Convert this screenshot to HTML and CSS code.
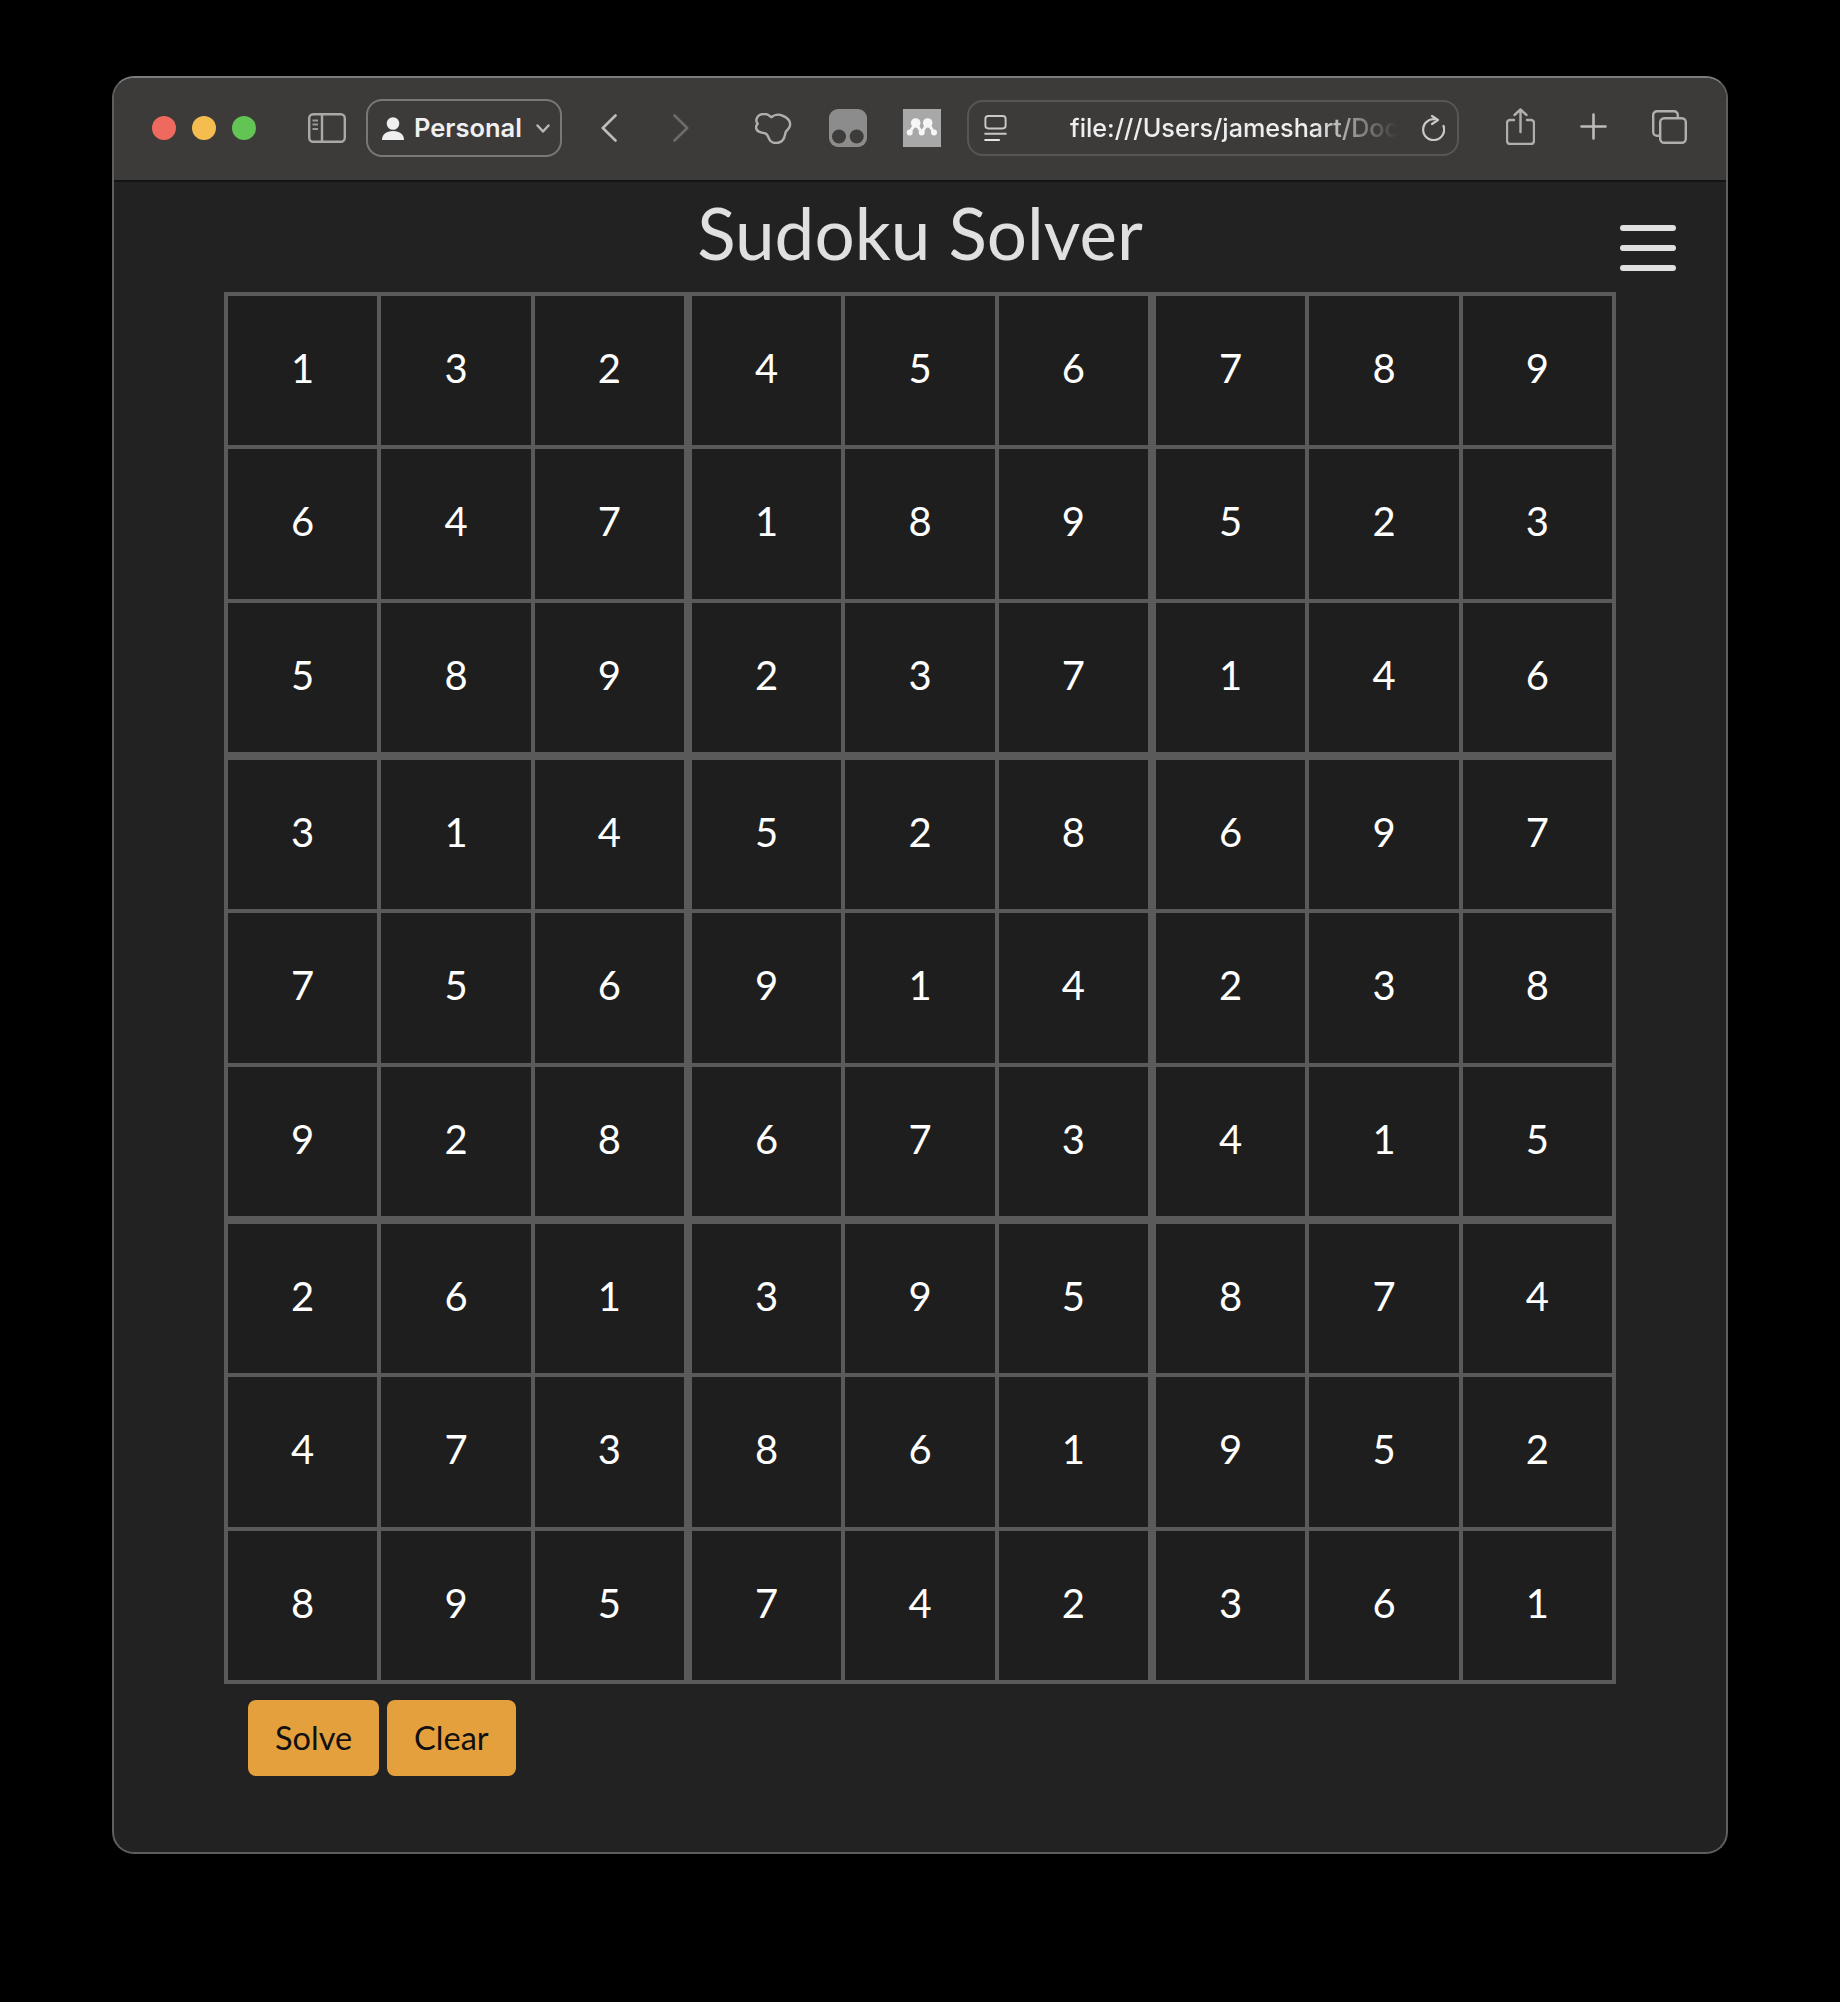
FILE: index.html
```html
<!DOCTYPE html>
<html lang="en">
<head>
    <meta charset="UTF-8">
    <meta name="viewport" content="width=device-width, initial-scale=1.0">
    <title>Sudoku Solver</title>
    <link rel="stylesheet" href="styles.css">
</head>
<body>
    <div class="window">
        <div class="toolbar">
            <span class="light red"></span>
            <span class="light yellow"></span>
            <span class="light green"></span>

            <svg class="icon sidebar-icon" viewBox="0 0 38 30" fill="none" stroke="#aaa9a8" stroke-width="2.4">
                <rect x="1.2" y="1.2" width="35.6" height="27.6" rx="4"/>
                <path d="M14 1.2v27.6"/>
                <path d="M4.500 7.500h5.500M4.500 11.500h5.500M4.500 16h5.500" stroke-width="2" stroke="#9a9998"/>
            </svg>

            <div class="profile">
                <svg class="person" viewBox="0 0 22 23" fill="#efefef">
                    <circle cx="11" cy="6.500" r="6.300"/>
                    <path d="M0 23c0-5.500 4-9 11-9s11 3.500 11 9z"/>
                </svg>
                <span class="profile-name">Personal</span>
                <svg class="profile-arrow" viewBox="0 0 14 9" fill="none" stroke="#b9b8b7" stroke-width="2.4" stroke-linecap="round" stroke-linejoin="round">
                    <path d="M1.500 1.500 7 7.500l5.500-6"/>
                </svg>
            </div>

            <svg class="icon nav-back" viewBox="0 0 16 28" fill="none" stroke="#bdbcbb" stroke-width="2.6" stroke-linecap="round" stroke-linejoin="round">
                <path d="M14.500 1.500 1.800 14l12.700 12.500"/>
            </svg>
            <svg class="icon nav-forward" viewBox="0 0 16 28" fill="none" stroke="#6c6b6a" stroke-width="2.6" stroke-linecap="round" stroke-linejoin="round">
                <path d="M1.500 1.500 14.200 14 1.500 26.500"/>
            </svg>

            <svg class="icon ext-cloud" viewBox="0 0 37 31" fill="none" stroke="#b0afae" stroke-width="2.4" stroke-linejoin="round">
                <path d="M2.700 10.700C.5 8.500 1 4 4.500 2 7.500.5 12 .5 14 2.500L16.500 4.200C19 2 23.500 1 27 2.500 32 4 36 8 35 12.500 34.500 16 31.500 17 30.500 19.500 30 22 30 25 27 28 23 31 18 30.500 15.500 28 13 25.500 13.500 21.500 10.500 20.500 7.500 19.500 4 20 2 17 .5 15 1 12.500 2.700 10.700z"/>
            </svg>
            <svg class="icon ext-glasses" viewBox="0 0 38 38">
                <rect width="38" height="38" rx="9" fill="#8c8c8c"/>
                <circle cx="10" cy="27.500" r="7" fill="#3d3c3b"/>
                <circle cx="27.700" cy="27.500" r="7" fill="#3d3c3b"/>
            </svg>
            <svg class="icon ext-people" viewBox="0 0 38 38">
                <rect width="38" height="38" fill="#a8a8a8"/>
                <path d="M6.700 23.500 12.700 14l6 9.500 6-9.500 6.300 9.500" fill="none" stroke="#f6f6f6" stroke-width="3"/>
                <g fill="#f6f6f6">
                    <circle cx="12.700" cy="14" r="4.800"/>
                    <circle cx="24.700" cy="14" r="4.800"/>
                    <circle cx="6.700" cy="23.500" r="3"/>
                    <circle cx="18.700" cy="23.500" r="3"/>
                    <circle cx="31" cy="23.500" r="3"/>
                </g>
            </svg>

            <div class="address">
                <svg class="page-icon" viewBox="0 0 23 27" fill="none" stroke="#c9c8c7" stroke-width="2">
                    <rect x="1" y="1" width="21" height="13" rx="3"/>
                    <path d="M0 19.500h23"/>
                    <path d="M0 26h16" stroke="#e6e6e6"/>
                </svg>
                <span class="url">file:///Users/jameshart/Docu</span>
                <svg class="reload" viewBox="0 0 23 26" fill="none" stroke="#c9c8c7" stroke-width="2.200" stroke-linecap="round" stroke-linejoin="round">
                    <path d="M13 4.200A10.500 10.500 0 1 0 21.500 11"/>
                    <path d="M10 1l6 4-6 4"/>
                </svg>
            </div>

            <svg class="icon share" viewBox="0 0 29 37" fill="none" stroke="#b0afae" stroke-width="2.400" stroke-linecap="round" stroke-linejoin="round">
                <path d="M8 12H4a3 3 0 0 0-3 3v18a3 3 0 0 0 3 3h21a3 3 0 0 0 3-3V15a3 3 0 0 0-3-3h-4"/>
                <path d="M14.500 24V1.500M8.500 7l6-5.500 6 5.500"/>
            </svg>
            <svg class="icon plus" viewBox="0 0 27 27" fill="none" stroke="#bdbcbb" stroke-width="2.600" stroke-linecap="round">
                <path d="M13.500 1.500v24M1.500 13.500h24"/>
            </svg>
            <svg class="icon tabs" viewBox="0 0 35 34" fill="none" stroke="#b0afae" stroke-width="2.400" stroke-linejoin="round">
                <path d="M8 25.800H5A3.800 3.800 0 0 1 1.200 22V5A3.800 3.800 0 0 1 5 1.200H22A3.800 3.800 0 0 1 25.800 5v3"/>
                <rect x="8.200" y="8.200" width="25.600" height="24.600" rx="4"/>
            </svg>
        </div>

        <div class="page">
            <header class="page-header">
                <h1>Sudoku Solver</h1>
                <button class="menu-button" aria-label="Menu">
                    <span></span><span></span><span></span>
                </button>
            </header>

            <div class="board" id="board"></div>

            <div class="actions">
                <button class="action">Solve</button>
                <button class="action">Clear</button>
            </div>
        </div>
    </div>

    <script>
        // solved grid, row by row
        const solution = [
            "132456789",
            "647189523",
            "589237146",
            "314528697",
            "756914238",
            "928673415",
            "261395874",
            "473861952",
            "895742361"
        ];

        const board = document.getElementById("board");

        for (let boxRow = 0; boxRow < 3; boxRow++) {
            for (let boxCol = 0; boxCol < 3; boxCol++) {
                const box = document.createElement("div");
                box.classList.add("box");
                for (let r = 0; r < 3; r++) {
                    for (let c = 0; c < 3; c++) {
                        const cell = document.createElement("div");
                        cell.classList.add("cell");
                        cell.textContent = solution[boxRow * 3 + r][boxCol * 3 + c];
                        box.appendChild(cell);
                    }
                }
                board.appendChild(box);
            }
        }
    </script>
</body>
</html>
```

FILE: styles.css
```css
html, body {
    margin: 0;
    height: 100%;
    background-color: #000;
}
body {
    font-family: Lato, "Open Sans", sans-serif;
    overflow: hidden;
}
.window {
    box-sizing: border-box;
    width: 1616px;
    height: 1778px;
    margin: 76px 0 0 112px;
    background-color: #222222;
    border: 2px solid #5e5e5e;
    border-top-color: #7d7d7c;
    border-radius: 22px;
    overflow: hidden;
}

/* safari style title bar */
.toolbar {
    box-sizing: border-box;
    display: flex;
    align-items: center;
    height: 104px;
    padding: 0 0 2px 38px;
    background-color: #3c3b3a;
    border-bottom: 2px solid #141414;
}
.icon {
    flex: none;
    display: block;
}
.light {
    flex: none;
    width: 24px;
    height: 24px;
    border-radius: 50%;
    margin-right: 16px;
}
.red {
    background-color: #ee6a5f;
}
.yellow {
    background-color: #f5bd4f;
}
.green {
    background-color: #61c454;
}
.sidebar-icon {
    width: 38px;
    height: 30px;
    margin-left: 36px;
}
.profile {
    box-sizing: border-box;
    flex: none;
    display: flex;
    align-items: center;
    width: 196px;
    height: 58px;
    margin-left: 20px;
    padding-left: 14px;
    border: 2px solid #797877;
    border-radius: 16px;
}
.person {
    width: 22px;
    height: 23px;
}
.profile-name {
    margin-left: 10px;
    margin-bottom: 2px;
    font-family: Inter, sans-serif;
    font-size: 25.500px;
    font-weight: 600;
    color: #f0f0f0;
}
.profile-arrow {
    width: 14px;
    height: 9px;
    margin-left: auto;
    margin-right: 10px;
}
.nav-back, .nav-forward {
    width: 16px;
    height: 28px;
}
.nav-back {
    margin-left: 39px;
}
.nav-forward {
    margin-left: 56px;
}
.ext-cloud {
    width: 37px;
    height: 31px;
    margin-left: 66px;
}
.ext-glasses {
    width: 38px;
    height: 38px;
    margin-left: 37px;
}
.ext-people {
    width: 38px;
    height: 38px;
    margin-left: 36px;
}
.address {
    box-sizing: border-box;
    flex: none;
    display: flex;
    align-items: center;
    width: 492px;
    height: 56px;
    margin-left: 26px;
    padding: 0 12px 0 15px;
    border: 2px solid #575655;
    border-radius: 16px;
}
.page-icon, .reload {
    flex: none;
    width: 23px;
    height: 26px;
}
.url {
    flex: 1;
    min-width: 0;
    margin: 0 24px 0 63px;
    font-family: Inter, sans-serif;
    font-size: 25.200px;
    font-weight: 500;
    color: #eeeeee;
    white-space: nowrap;
    overflow: hidden;
    -webkit-mask-image: linear-gradient(to right, #000 74%, transparent 100%);
    mask-image: linear-gradient(to right, #000 74%, transparent 100%);
}
.share {
    width: 29px;
    height: 37px;
    margin: 0 0 3px 47px;
}
.plus {
    width: 27px;
    height: 27px;
    margin: 0 0 3px 45px;
}
.tabs {
    width: 35px;
    height: 34px;
    margin: 0 0 3px 45px;
}

/* page content */
.page {
    padding: 0 110px;
}
.page-header {
    display: grid;
    grid-template-columns: 1fr auto 1fr;
    align-items: center;
    height: 110px;
}
h1 {
    grid-column: 2;
    margin: 0 0 9px;
    font-size: 71px;
    font-weight: 400;
    color: #e0e0e0;
}
.menu-button {
    grid-column: 3;
    justify-self: end;
    display: flex;
    flex-direction: column;
    gap: 14px;
    width: 56px;
    margin-right: -60px;
    margin-top: 22px;
    padding: 0;
    background: none;
    border: none;
    cursor: pointer;
}
.menu-button span {
    height: 6px;
    border-radius: 3px;
    background-color: #e0e0e0;
}
.board {
    box-sizing: border-box;
    display: grid;
    grid-template-columns: repeat(3, 1fr);
    gap: 8px;
    width: 1392px;
    height: 1392px;
    padding: 4px;
    background-color: #5a5a5a;
}
.box {
    display: grid;
    grid-template-columns: repeat(3, 1fr);
    grid-template-rows: repeat(3, 1fr);
    gap: 4px;
}
.cell {
    display: flex;
    align-items: center;
    justify-content: center;
    padding-bottom: 5px;
    background-color: #1e1e1e;
    font-size: 40px;
    color: #ffffff;
}
.actions {
    display: flex;
    gap: 8px;
    margin: 16px 0 0 24px;
}
.action {
    height: 76px;
    padding: 0 27px 2px;
    background-color: #e5a03e;
    border: none;
    border-radius: 8px;
    font-family: Lato, sans-serif;
    font-size: 32.500px;
    color: #111111;
    cursor: pointer;
}
```
